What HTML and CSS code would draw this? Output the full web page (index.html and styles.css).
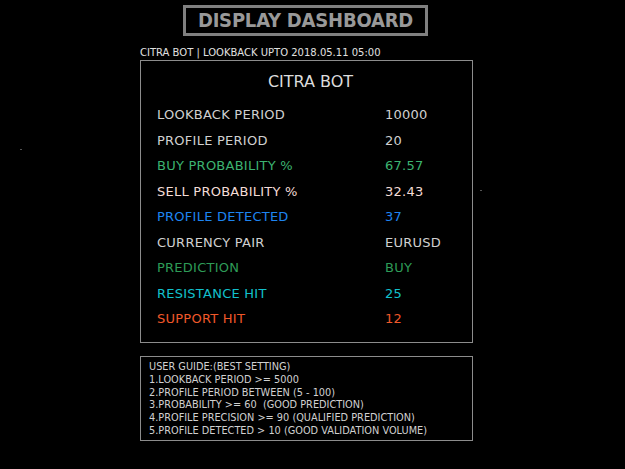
FILE: index.html
```html
<!DOCTYPE html>
<html lang="en">
<head>
    <meta charset="UTF-8">
    <title>Display Dashboard</title>
    <link rel="stylesheet" href="styles.css">
</head>
<body>
    <div class="wrap">
        <div class="title">DISPLAY DASHBOARD</div>
        <div class="sub">CITRA BOT | LOOKBACK UPTO 2018.05.11 05:00</div>
        <div class="panel">
            <h2>CITRA BOT</h2>
            <ul class="rows">
                <li><span>LOOKBACK PERIOD</span><span>10000</span></li>
                <li><span>PROFILE PERIOD</span><span>20</span></li>
                <li class="green"><span>BUY PROBABILITY %</span><span>67.57</span></li>
                <li class="rose"><span>SELL PROBABILITY %</span><span>32.43</span></li>
                <li class="blue"><span>PROFILE DETECTED</span><span>37</span></li>
                <li><span>CURRENCY PAIR</span><span>EURUSD</span></li>
                <li class="sea"><span>PREDICTION</span><span>BUY</span></li>
                <li class="cyan"><span>RESISTANCE HIT</span><span>25</span></li>
                <li class="red"><span>SUPPORT HIT</span><span>12</span></li>
            </ul>
        </div>
        <div class="guide">
            <p>USER GUIDE:(BEST SETTING)</p>
            <p>1.LOOKBACK PERIOD &gt;= 5000</p>
            <p>2.PROFILE PERIOD BETWEEN (5 - 100)</p>
            <p>3.PROBABILITY &gt;= 60&nbsp; (GOOD PREDICTION)</p>
            <p>4.PROFILE PRECISION &gt;= 90 (QUALIFIED PREDICTION)</p>
            <p>5.PROFILE DETECTED &gt; 10 (GOOD VALIDATION VOLUME)</p>
        </div>
    </div>
    <!-- stray chart marks -->
    <i class="dot dot_l"></i>
    <i class="dot dot_r"></i>
</body>
</html>
```
FILE: styles.css
```css
html,
body {
    margin: 0;
    background: #000;
    height: 100%;
}

body {
    position: relative;
    font-family: "DejaVu Sans", sans-serif;
    color: #d0d0d0;
}

.wrap {
    padding: 5px 0 0 140px;
    width: 333px;
}

.title {
    margin-left: 43px;
    width: 245px;
    height: 31px;
    box-sizing: border-box;
    border: 3px solid #808080;
    color: #999;
    font: bold 20px "DejaVu Sans Condensed", "DejaVu Sans", sans-serif;
    letter-spacing: -0.2px;
    line-height: 25px;
    text-align: center;
}

.sub {
    margin-top: 9px;
    height: 15px;
    font-size: 10px;
    line-height: 15px;
    color: #e0e0e0;
}

.panel {
    height: 283px;
    box-sizing: border-box;
    border: 1px solid #8c8c8c;
}

h2 {
    margin: 11px 0 10px;
    padding-left: 8px;
    font-size: 16px;
    font-weight: normal;
    text-align: center;
    color: #dcdcdc;
    line-height: 20px;
}

.rows {
    margin: 0;
    padding: 0 0 0 16px;
}

.rows li {
    list-style: none;
    display: grid;
    grid-template-columns: 228px auto;
    height: 25.5px;
    font-size: 13px;
    letter-spacing: 0.25px;
    line-height: 25px;
}

.green { color: #3cb371; }
.rose { color: #f4dcd6; }
.blue { color: #1e84f0; }
.sea { color: #2e9b57; }
.cyan { color: #12c0cc; }
.red { color: #f0582a; }

.guide {
    margin-top: 13px;
    height: 85px;
    box-sizing: border-box;
    border: 1px solid #8c8c8c;
    padding: 4px 0 0 8px;
}

.guide p {
    margin: 0;
    font-size: 9.75px;
    line-height: 12.8px;
    color: #d0d0d0;
}

.dot {
    position: absolute;
    width: 2px;
    height: 1px;
    background: #555;
}

.dot_l { left: 20px; top: 149px; }
.dot_r { left: 480px; top: 190px; }
```
